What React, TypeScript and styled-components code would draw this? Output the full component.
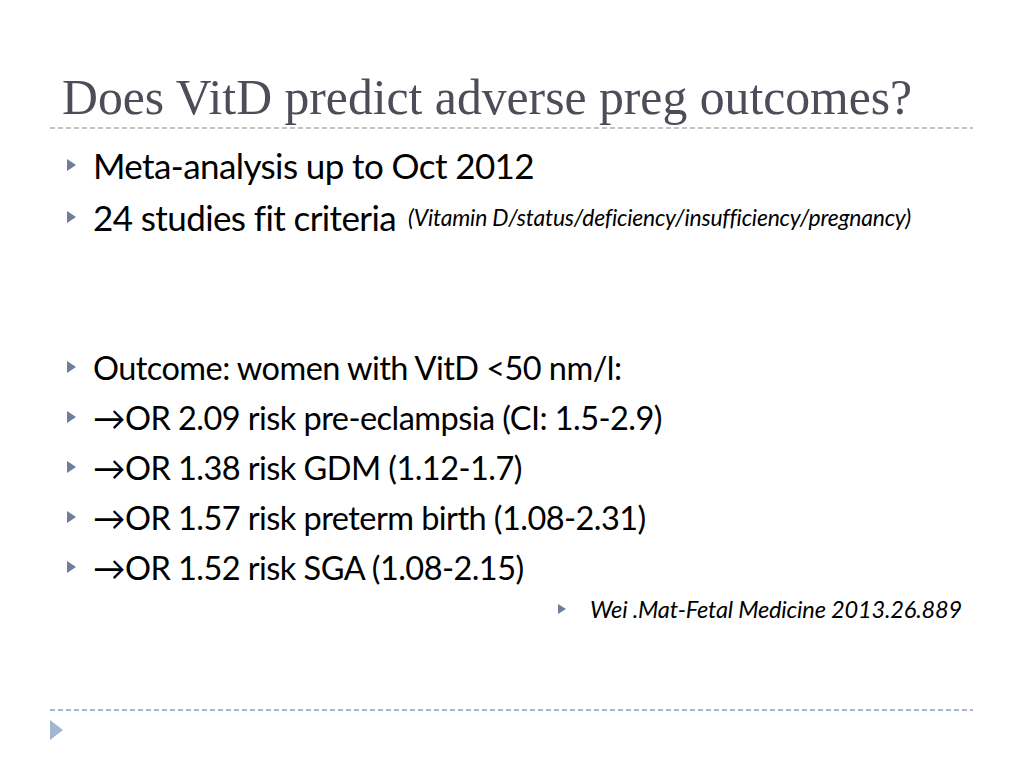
import React from 'react';
import styled, { createGlobalStyle } from 'styled-components';

const GlobalStyle = createGlobalStyle`
  html, body {
    margin: 0;
    padding: 0;
    background: #ffffff;
  }
`;

const Slide = styled.div`
  width: 1024px;
  height: 768px;
  background: #ffffff;
  display: flex;
  flex-direction: column;
  padding: 0 51px 0 50px;
  box-sizing: border-box;
  overflow: hidden;
`;

const Title = styled.h1`
  margin: 72px 0 0 12px;
  font-family: "Liberation Serif", serif;
  font-weight: normal;
  font-size: 49.7px;
  line-height: 52px;
  color: #4d4d5a;
  white-space: nowrap;
`;

const Rule = styled.div<{ $color: string }>`
  height: 2px;
  margin-top: ${({ $color }) => ($color === 'grey' ? '3px' : '0')};
  background: repeating-linear-gradient(
    to right,
    ${({ $color }) => ($color === 'grey' ? '#c4c4c4' : '#a9b9cd')} 0 5px,
    transparent 5px 8px
  );
`;

const List = styled.ul`
  list-style: none;
  margin: 10px 0 0 0;
  padding: 0 0 0 17px;
`;

const Item = styled.li<{ $gap?: number; $big?: boolean }>`
  display: flex;
  align-items: center;
  height: ${({ $big }) => ($big ? 52 : 50)}px;
  margin-top: ${({ $gap }) => $gap ?? 0}px;
  font-family: "Lato", "Open Sans", sans-serif;
  font-size: ${({ $big }) => ($big ? 35 : 32.5)}px;
  letter-spacing: ${({ $big }) => ($big ? -0.6 : -0.55)}px;
  color: #000000;
  white-space: nowrap;
`;

const Arrow = styled.span<{ $small?: boolean }>`
  flex: none;
  width: 0;
  height: 0;
  border-top: ${({ $small }) => ($small ? 5.5 : 6.5)}px solid transparent;
  border-bottom: ${({ $small }) => ($small ? 5.5 : 6.5)}px solid transparent;
  border-left: ${({ $small }) => ($small ? 8 : 9)}px solid #6d7d9c;
  margin-right: ${({ $small }) => ($small ? 24 : 17)}px;
`;

const Note = styled.em`
  font-size: 22.9px;
  letter-spacing: -0.2px;
  margin-left: 12px;
`;

const Ref = styled.div`
  display: flex;
  align-items: center;
  margin: 0 0 0 508px;
  height: 34px;
  font-family: "Lato", "Open Sans", sans-serif;
  font-style: italic;
  font-size: 23.6px;
  letter-spacing: -0.2px;
  color: #000000;
  white-space: nowrap;
`;

const Footer = styled.div`
  margin-top: auto;
  margin-bottom: 28px;
`;

const CornerMark = styled.div`
  width: 0;
  height: 0;
  margin-top: 9px;
  border-top: 10px solid transparent;
  border-bottom: 10px solid transparent;
  border-left: 13px solid #a3b6cf;
`;

const points = [
  'Outcome: women with VitD <50 nm/l:',
  '\u2192OR 2.09 risk pre-eclampsia (CI: 1.5-2.9)',
  '\u2192OR 1.38 risk GDM (1.12-1.7)',
  '\u2192OR 1.57 risk preterm birth (1.08-2.31)',
  '\u2192OR 1.52 risk SGA (1.08-2.15)',
];

export default function App() {
  return (
    <>
      <GlobalStyle />
      <Slide>
        <Title>Does VitD predict adverse preg outcomes?</Title>
        <Rule $color="grey" />
        <List>
          <Item $big>
            <Arrow />
            Meta-analysis up to Oct 2012
          </Item>
          <Item $big>
            <Arrow />
            24 studies fit criteria
            <Note>(Vitamin D/status/deficiency/insufficiency/pregnancy)</Note>
          </Item>
          {points.map((p, i) => (
            <Item key={p} $gap={i === 0 ? 99 : 0}>
              <Arrow />
              {p}
            </Item>
          ))}
        </List>
        <Ref>
          <Arrow $small />
          Wei .Mat-Fetal Medicine 2013.26.889
        </Ref>
        <Footer>
          <Rule $color="blue" />
          <CornerMark />
        </Footer>
      </Slide>
    </>
  );
}
